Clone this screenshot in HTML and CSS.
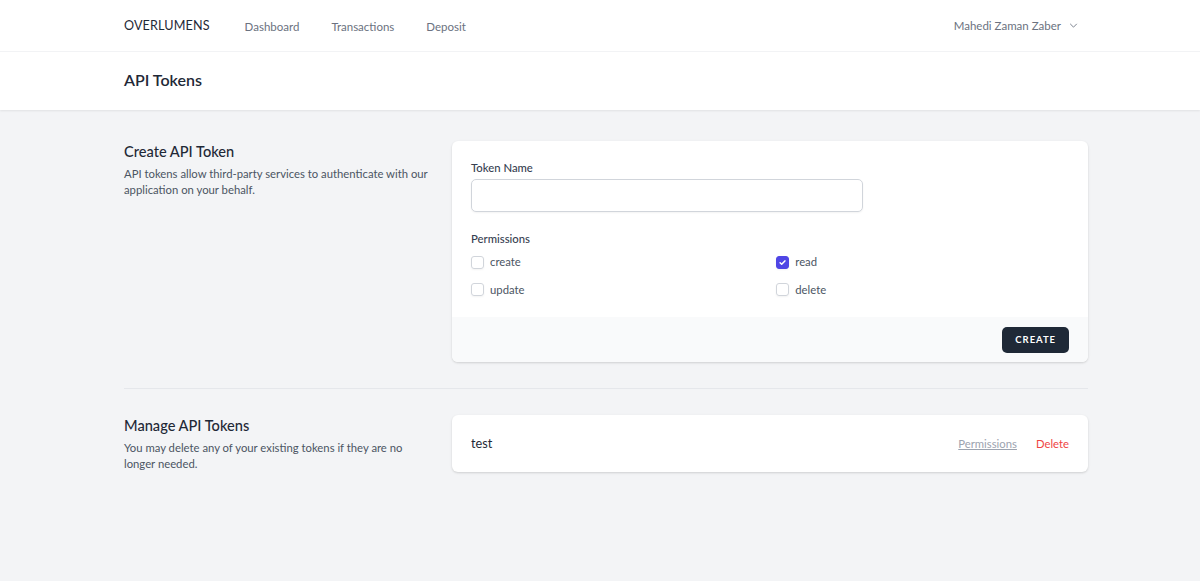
FILE: index.html
```html
<!DOCTYPE html>
<html lang="en">
<head>
    <meta charset="UTF-8">
    <meta name="viewport" content="width=device-width, initial-scale=1.0">
    <title>API Tokens - Overlumens</title>
    <link rel="stylesheet" href="styles.css">
</head>
<body>
    <nav class="topnav">
        <div class="container nav-inner">
            <div class="nav-left">
                <a class="logo" href="#">OVERLUMENS</a>
                <div class="nav-links">
                    <a href="#">Dashboard</a>
                    <a href="#">Transactions</a>
                    <a href="#">Deposit</a>
                </div>
            </div>
            <button class="user-menu">
                Mahedi Zaman Zaber
                <svg width="11" height="11" viewBox="0 0 20 20" fill="none" stroke="currentColor" stroke-width="1.6">
                    <path d="M4 7l6 6 6-6"/>
                </svg>
            </button>
        </div>
    </nav>

    <header class="page-header">
        <div class="container">
            <h2>API Tokens</h2>
        </div>
    </header>

    <main class="content">
        <div class="container">
            <!-- crear token -->
            <section class="section">
                <div class="section-info">
                    <h3>Create API Token</h3>
                    <p>API tokens allow third-party services to authenticate with our application on your behalf.</p>
                </div>
                <div class="card">
                    <div class="card-body">
                        <div class="field">
                            <label class="label" for="name">Token Name</label>
                            <input id="name" class="input" type="text">
                        </div>
                        <div class="field">
                            <span class="label">Permissions</span>
                            <div class="perm-grid">
                                <label class="perm"><span class="check"></span>create</label>
                                <label class="perm"><span class="check checked">
                                    <svg viewBox="0 0 16 16" fill="none" stroke="#fff" stroke-width="2.2" stroke-linecap="round" stroke-linejoin="round"><path d="M4.5 8.3l2.3 2.3 4.7-4.9"/></svg>
                                </span>read</label>
                                <label class="perm"><span class="check"></span>update</label>
                                <label class="perm"><span class="check"></span>delete</label>
                            </div>
                        </div>
                    </div>
                    <div class="card-footer">
                        <button class="btn">Create</button>
                    </div>
                </div>
            </section>

            <div class="divider"></div>

            <!-- administrar tokens -->
            <section class="section">
                <div class="section-info">
                    <h3>Manage API Tokens</h3>
                    <p>You may delete any of your existing tokens if they are no longer needed.</p>
                </div>
                <div class="card">
                    <div class="card-body token-row">
                        <span class="token-name">test</span>
                        <div class="token-actions">
                            <a class="link-muted" href="#">Permissions</a>
                            <a class="link-danger" href="#">Delete</a>
                        </div>
                    </div>
                </div>
            </section>
        </div>
    </main>
</body>
</html>
```

FILE: styles.css
```css
* {
    box-sizing: border-box;
}
body {
    margin: 0;
    font-family: Lato, "Open Sans", sans-serif;
    background-color: #f3f4f6;
    color: #1f2937;
    min-height: 100vh;
}
a {
    text-decoration: none;
}
.container {
    width: 964px;
    margin: 0 112px 0 124px;
}

/* barra superior */
.topnav {
    background-color: white;
    border-bottom: 1px solid #f3f4f6;
}
.nav-inner {
    height: 51px;
    display: flex;
    justify-content: space-between;
    align-items: center;
}
.nav-left {
    display: flex;
    align-items: center;
    gap: 35px;
}
.logo {
    font-size: 12.6px;
    letter-spacing: 0.01em;
    color: #1f2937;
}
.nav-links {
    display: flex;
    gap: 32px;
}
.nav-links a {
    font-size: 11.5px;
    color: #6b7280;
    padding-top: 2px;
}
.user-menu {
    display: flex;
    align-items: center;
    gap: 7px;
    background: none;
    border: none;
    font-family: inherit;
    font-size: 11.5px;
    color: #6b7280;
    padding: 0 9px 0 0;
}

/* cabecera */
.page-header {
    background-color: white;
    box-shadow: 0 1px 2px rgba(0, 0, 0, 0.08);
}
.page-header .container {
    height: 58px;
    padding-bottom: 4px;
    display: flex;
    align-items: center;
}
.page-header h2 {
    margin: 0;
    font-size: 16px;
    font-weight: 600;
    color: #1f2937;
}

/* contenido */
.content .container {
    padding: 31px 0;
}
.section {
    display: grid;
    grid-template-columns: 309px 1fr;
    gap: 19px;
}
.section-info h3 {
    margin: 0;
    font-size: 14.6px;
    font-weight: 500;
    line-height: 22px;
    color: #1f2937;
}
.section-info p {
    margin: 3px 0 0;
    font-size: 11.3px;
    line-height: 16px;
    color: #4b5563;
}
.card {
    background-color: white;
    border-radius: 6px;
    box-shadow: 0 1px 3px rgba(0, 0, 0, 0.1), 0 1px 2px rgba(0, 0, 0, 0.06);
    overflow: hidden;
}
.card-body {
    padding: 19px;
}
.field + .field {
    margin-top: 19px;
}
.label {
    display: block;
    font-size: 11.3px;
    font-weight: 500;
    line-height: 16px;
    color: #374151;
}
.input {
    display: block;
    margin-top: 3px;
    width: 392px;
    height: 33px;
    border: 1px solid #d1d5db;
    border-radius: 5px;
    box-shadow: 0 1px 2px rgba(0, 0, 0, 0.05);
}
.perm-grid {
    margin-top: 7px;
    display: grid;
    grid-template-columns: 1fr 1fr;
    gap: 11.5px 12.5px;
}
.perm {
    display: flex;
    align-items: center;
    gap: 6px;
    font-size: 11.3px;
    line-height: 16px;
    color: #4b5563;
}
.check {
    width: 13px;
    height: 13px;
    border: 1px solid #d1d5db;
    border-radius: 3px;
    box-shadow: 0 1px 2px rgba(0, 0, 0, 0.05);
}
.check.checked {
    background-color: #4f46e5;
    border-color: #4f46e5;
}
.check svg {
    display: block;
    width: 11px;
    height: 11px;
}
.card-footer {
    background-color: #f9fafb;
    padding: 10px 19px 9px;
    text-align: right;
}
.btn {
    background-color: #1f2937;
    color: white;
    border: none;
    border-radius: 5px;
    height: 26px;
    padding: 0 13px;
    font-family: inherit;
    font-size: 9.5px;
    font-weight: 700;
    letter-spacing: 0.1em;
    text-transform: uppercase;
}
.divider {
    margin: 26px 0;
    border-top: 1px solid #e5e7eb;
}
.token-row {
    display: flex;
    justify-content: space-between;
    align-items: center;
}
.token-name {
    font-size: 12.7px;
    line-height: 19px;
    color: #1f2937;
}
.token-actions {
    display: flex;
    gap: 19px;
    font-size: 11.3px;
}
.link-muted {
    color: #9ca3af;
    text-decoration: underline;
}
.link-danger {
    color: #ef4444;
}
```
